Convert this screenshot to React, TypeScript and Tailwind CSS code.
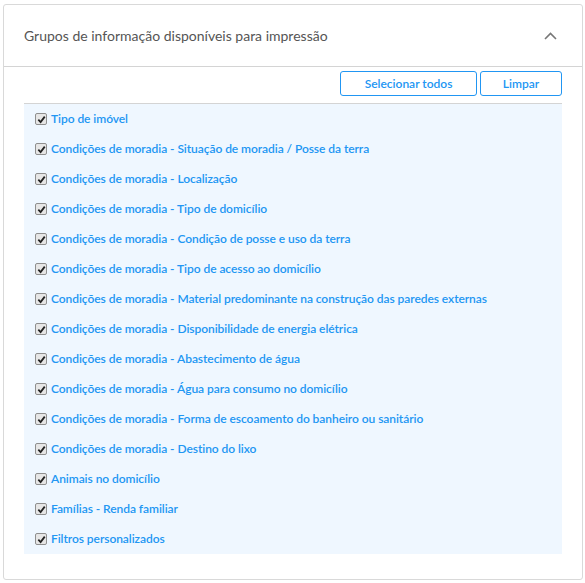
const items = [
  "Tipo de imóvel",
  "Condições de moradia - Situação de moradia / Posse da terra",
  "Condições de moradia - Localização",
  "Condições de moradia - Tipo de domicílio",
  "Condições de moradia - Condição de posse e uso da terra",
  "Condições de moradia - Tipo de acesso ao domicílio",
  "Condições de moradia - Material predominante na construção das paredes externas",
  "Condições de moradia - Disponibilidade de energia elétrica",
  "Condições de moradia - Abastecimento de água",
  "Condições de moradia - Água para consumo no domicílio",
  "Condições de moradia - Forma de escoamento do banheiro ou sanitário",
  "Condições de moradia - Destino do lixo",
  "Animais no domicílio",
  "Famílias - Renda familiar",
  "Filtros personalizados",
]

const CheckBox = () => (
  <span className="w-[12px] h-[12px] shrink-0 rounded-[2px] border border-[#8f8f8f] bg-[#e6e6e6] flex items-center justify-center">
    <svg width="9" height="9" viewBox="0 0 10 10">
      <path d="M1.5 5.2 L4 7.8 L8.6 1.8" fill="none" stroke="#222" strokeWidth="2" />
    </svg>
  </span>
)

export default function App() {
  return (
    <div className="bg-white w-[585px] h-[583px] pt-[4px] pl-[3px] pr-[2px] pb-[3px] font-['Lato','Liberation_Sans',sans-serif]">
      <div className="h-[576px] border border-[#d9d9d9] rounded-[3px] flex flex-col">
        <div className="h-[62px] flex items-center justify-between pl-[20px] pr-[25px] border-b border-[#d4d4d4]">
          <span className="text-[14px] text-[#555]">Grupos de informação disponíveis para impressão</span>
          <svg width="13" height="8" viewBox="0 0 13 8">
            <path d="M1 7 L6.5 1.5 L12 7" fill="none" stroke="#777" strokeWidth="1.6" />
          </svg>
        </div>
        <div className="px-[20px]">
          <div className="flex justify-end gap-[3px] pt-[4px] pb-[7px]">
            <button className="w-[137px] h-[25px] border border-[#2196f3] rounded-[3px] text-[12px] font-semibold text-[#2196f3]">
              Selecionar todos
            </button>
            <button className="w-[82px] h-[25px] border border-[#2196f3] rounded-[3px] text-[12px] font-semibold text-[#2196f3]">
              Limpar
            </button>
          </div>
          <div className="bg-[#eff7ff] border-t border-[#d4d4d4]">
            {items.map((t) => (
              <div key={t} className="h-[30px] flex items-center gap-[4px] pl-[11px]">
                <CheckBox />
                <span className="text-[12px] font-semibold tracking-[-0.06px] text-[#2196f3]">{t}</span>
              </div>
            ))}
          </div>
        </div>
      </div>
    </div>
  )
}
